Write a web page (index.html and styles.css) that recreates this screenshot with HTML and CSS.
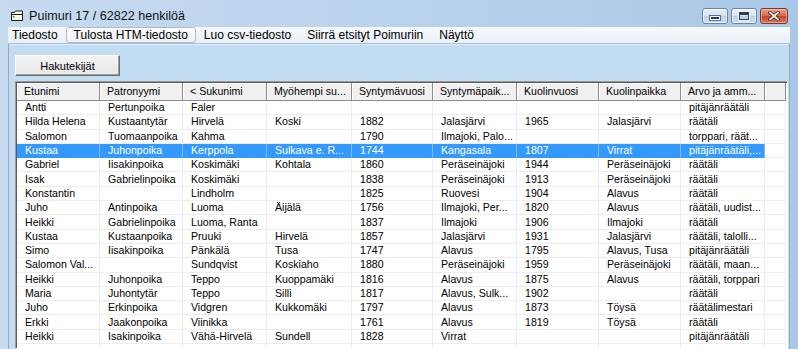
FILE: index.html
```html
<!DOCTYPE html>
<html lang="fi">
<head>
    <meta charset="UTF-8">
    <title>Puimuri 17</title>
    <link rel="stylesheet" href="styles.css">
</head>
<body>
    <div class="window">
        <div class="titlebar">
            <svg class="app-icon" width="12" height="11" viewBox="0 0 12 11">
                <path d="M0.5 2.5h3l1-1.5h7v9.5h-11z" fill="#fdfbe8" stroke="#1b1b1b"/>
                <path d="M0.5 4.5h11" stroke="#1b1b1b"/>
                <path d="M2 6h1.5v1.5H2z" fill="#3a6fb4"/>
            </svg>
            <span class="title">Puimuri 17 / 62822 henkilöä</span>
            <div class="caption">
                <span class="cbtn"><i class="glyph-min"></i></span>
                <span class="cbtn"><i class="glyph-max"></i></span>
                <span class="cbtn close">
                    <svg width="12" height="10" viewBox="0 0 12 10">
                        <path d="M2 1.5l8 7M10 1.5l-8 7" stroke="#4a1c16" stroke-width="3.2" stroke-linecap="square"/>
                        <path d="M2 1.5l8 7M10 1.5l-8 7" stroke="#fff" stroke-width="1.7" stroke-linecap="square"/>
                    </svg>
                </span>
            </div>
        </div>
        <div class="frame">
            <nav class="menubar">
                <span class="menu-item">Tiedosto</span>
                <span class="menu-item hot">Tulosta HTM-tiedosto</span>
                <span class="menu-item">Luo csv-tiedosto</span>
                <span class="menu-item">Siirrä etsityt Poimuriin</span>
                <span class="menu-item">Näyttö</span>
            </nav>
            <div class="client">
                <button class="search-btn">Hakutekijät</button>
                <div class="grid-wrap">
                    <table class="grid">
                        <colgroup>
                            <col class="c83"><col class="c83"><col class="c84"><col class="c85"><col class="c81">
                            <col class="c84"><col class="c82"><col class="c82"><col class="c84"><col class="c21">
                        </colgroup>
                        <thead>
                            <tr><th>Etunimi</th><th>Patronyymi</th><th>&lt; Sukunimi</th><th>Myöhempi su...</th><th>Syntymävuosi</th><th>Syntymäpaik...</th><th>Kuolinvuosi</th><th>Kuolinpaikka</th><th>Arvo ja amm...</th><th></th></tr>
                        </thead>
                        <tbody>
                            <tr><td>Antti</td><td>Pertunpoika</td><td>Faler</td><td></td><td></td><td></td><td></td><td></td><td>pitäjänräätäli</td><td></td></tr>
                            <tr><td>Hilda Helena</td><td>Kustaantytär</td><td>Hirvelä</td><td>Koski</td><td>1882</td><td>Jalasjärvi</td><td>1965</td><td>Jalasjärvi</td><td>räätäli</td><td></td></tr>
                            <tr><td>Salomon</td><td>Tuomaanpoika</td><td>Kahma</td><td></td><td>1790</td><td>Ilmajoki, Palo...</td><td></td><td></td><td>torppari, räät...</td><td></td></tr>
                            <tr class="sel"><td>Kustaa</td><td>Juhonpoika</td><td>Kerppola</td><td>Sulkava e. R...</td><td>1744</td><td>Kangasala</td><td>1807</td><td>Virrat</td><td>pitäjänräätäli,...</td><td></td></tr>
                            <tr><td>Gabriel</td><td>Iisakinpoika</td><td>Koskimäki</td><td>Kohtala</td><td>1860</td><td>Peräseinäjoki</td><td>1944</td><td>Peräseinäjoki</td><td>räätäli</td><td></td></tr>
                            <tr><td>Isak</td><td>Gabrielinpoika</td><td>Koskimäki</td><td></td><td>1838</td><td>Peräseinäjoki</td><td>1913</td><td>Peräseinäjoki</td><td>räätäli</td><td></td></tr>
                            <tr><td>Konstantin</td><td></td><td>Lindholm</td><td></td><td>1825</td><td>Ruovesi</td><td>1904</td><td>Alavus</td><td>räätäli</td><td></td></tr>
                            <tr><td>Juho</td><td>Antinpoika</td><td>Luoma</td><td>Äijälä</td><td>1756</td><td>Ilmajoki, Per...</td><td>1820</td><td>Alavus</td><td>räätäli, uudist...</td><td></td></tr>
                            <tr><td>Heikki</td><td>Gabrielinpoika</td><td>Luoma, Ranta</td><td></td><td>1837</td><td>Ilmajoki</td><td>1906</td><td>Ilmajoki</td><td>räätäli</td><td></td></tr>
                            <tr><td>Kustaa</td><td>Kustaanpoika</td><td>Pruuki</td><td>Hirvelä</td><td>1857</td><td>Jalasjärvi</td><td>1931</td><td>Jalasjärvi</td><td>räätäli, talolli...</td><td></td></tr>
                            <tr><td>Simo</td><td>Iisakinpoika</td><td>Pänkälä</td><td>Tusa</td><td>1747</td><td>Alavus</td><td>1795</td><td>Alavus, Tusa</td><td>pitäjänräätäli</td><td></td></tr>
                            <tr><td>Salomon Val...</td><td></td><td>Sundqvist</td><td>Koskiaho</td><td>1880</td><td>Peräseinäjoki</td><td>1959</td><td>Peräseinäjoki</td><td>räätäli, maan...</td><td></td></tr>
                            <tr><td>Heikki</td><td>Juhonpoika</td><td>Teppo</td><td>Kuoppamäki</td><td>1816</td><td>Alavus</td><td>1875</td><td>Alavus</td><td>räätäli, torppari</td><td></td></tr>
                            <tr><td>Maria</td><td>Juhontytär</td><td>Teppo</td><td>Silli</td><td>1817</td><td>Alavus, Sulk...</td><td>1902</td><td></td><td>räätäli</td><td></td></tr>
                            <tr><td>Juho</td><td>Erkinpoika</td><td>Vidgren</td><td>Kukkomäki</td><td>1797</td><td>Alavus</td><td>1873</td><td>Töysä</td><td>räätälimestari</td><td></td></tr>
                            <tr><td>Erkki</td><td>Jaakonpoika</td><td>Viinikka</td><td></td><td>1761</td><td>Alavus</td><td>1819</td><td>Töysä</td><td>räätäli</td><td></td></tr>
                            <tr><td>Heikki</td><td>Isakinpoika</td><td>Vähä-Hirvelä</td><td>Sundell</td><td>1828</td><td>Virrat</td><td></td><td></td><td>pitäjänräätäli</td><td></td></tr>
                            <tr><td></td><td></td><td></td><td></td><td></td><td></td><td></td><td></td><td></td><td></td></tr>
                        </tbody>
                    </table>
                </div>
            </div>
        </div>
    </div>
</body>
</html>
```

FILE: styles.css
```css
@charset "UTF-8";

* {
    margin: 0;
    padding: 0;
    box-sizing: border-box;
}

html, body {
    width: 798px;
    height: 349px;
    overflow: hidden;
}

body {
    font-family: "Liberation Sans", Arial, sans-serif;
    color: #000;
    background: linear-gradient(to right, #c6dbf0, #b4cfea 70%, #a9c8e8);
}

.window {
    display: flex;
    flex-direction: column;
    height: 100%;
}

/* title bar */
.titlebar {
    height: 27px;
    padding: 4px 10px 0 11px;
    display: flex;
    align-items: center;
}
.app-icon {margin-right: 6px;}
.title {font-size: 12.6px; color: #111;}

.caption {
    margin-left: auto;
    display: flex;
    gap: 3px;
}
.cbtn {
    width: 26px;
    height: 16px;
    border: 1px solid #6d84a4;
    border-radius: 3px;
    background: linear-gradient(#eaf1f9, #d3e1f1 48%, #bccfe6 52%, #cfdff1);
    box-shadow: inset 0 0 0 1px rgba(255, 255, 255, 0.6);
    display: flex;
    align-items: center;
    justify-content: center;
}
.cbtn.close {
    width: 28px;
    border-color: #7b362c;
    background: linear-gradient(#eaa48f, #d6694f 48%, #c3452b 52%, #d8785c);
    box-shadow: inset 0 0 0 1px rgba(255, 210, 200, 0.5);
}
.glyph-min {
    width: 10px;
    height: 4px;
    margin-top: 5px;
    background: #2c3e5c;
    border: 1px solid #f4f8fc;
    outline: 1px solid #5a6f8f;
}
.glyph-max {
    width: 10px;
    height: 8px;
    border: 1px solid #2c3e5c;
    border-top-width: 3px;
    outline: 1px solid #f4f8fc;
}

/* frame & menu */
.frame {
    flex: 1;
    display: flex;
    flex-direction: column;
    padding: 0 8px;
    min-height: 0;
}

.menubar {
    height: 17px;
    display: flex;
    align-items: center;
    font-size: 12px;
    background: linear-gradient(#f7f9fc, #e9eff7);
    border-bottom: 1px solid #a8bed6;
}
.menu-item {
    padding: 0 7px;
    height: 16px;
    line-height: 14px;
    border: 1px solid transparent;
    white-space: nowrap;
}
.menu-item:first-child {padding-left: 3px;}
.menu-item.hot {
    border-color: #b3b9c2;
    border-radius: 3px;
    background: linear-gradient(#fdfdfe, #eef2f7);
}

.client {
    flex: 1;
    min-height: 0;
    background: #c2dcf2;
    border-left: 1px solid #94aac2;
    border-right: 1px solid #94aac2;
    box-shadow: inset 0 8px 0 -7px #e4eff9;
    padding: 11px 1px 0 6px;
    display: flex;
    flex-direction: column;
    align-items: flex-start;
}

.search-btn {
    width: 105px;
    height: 21px;
    font-family: "Liberation Sans", Arial, sans-serif;
    font-size: 11px;
    color: #000;
    background: linear-gradient(#f4f4f4, #e6e6e6);
    border: 1px solid;
    border-color: #fff #6a6a6a #6a6a6a #fff;
    box-shadow: inset -1px -1px 0 #a0a0a0;
}

/* list view */
.grid-wrap {
    margin-top: 5px;
    width: 773px;
    flex: 1;
    min-height: 0;
    overflow: hidden;
    background: #fff;
    border: 1px solid;
    border-color: #9a9a9a #fff #fff #9a9a9a;
    box-shadow: inset 1px 1px 0 #5a5a5a;
    padding: 1px 0 0 1px;
}

.grid {
    border-collapse: separate;
    border-spacing: 0;
    table-layout: fixed;
    width: 769px;
    font-size: 10.6px;
}
.c81 {width: 81px;}
.c82 {width: 82px;}
.c83 {width: 83px;}
.c84 {width: 84px;}
.c85 {width: 85px;}
.c21 {width: 21px;}

.grid th {
    height: 18px;
    line-height: 17px;
    padding: 0 0 0 7px;
    font-weight: normal;
    text-align: left;
    white-space: nowrap;
    overflow: hidden;
    background: #f0f0f0;
    border-right: 1px solid #8c8c8c;
    border-bottom: 1px solid #8c8c8c;
    box-shadow: inset 1px 1px 0 #fff;
}

.grid td {
    height: 14.3px;
    line-height: 13px;
    padding: 0 0 0 8px;
    white-space: nowrap;
    overflow: hidden;
    border-right: 1px solid #ededed;
    border-bottom: 1px solid #ededed;
}

.grid tr.sel td {background: #3399ff; color: #fff; border-color: #3399ff #7dbdff #3399ff #3399ff;}
.grid tr.sel td:last-child {background: #fff; border-right-color: #ededed; border-bottom-color: #ededed;}
```
